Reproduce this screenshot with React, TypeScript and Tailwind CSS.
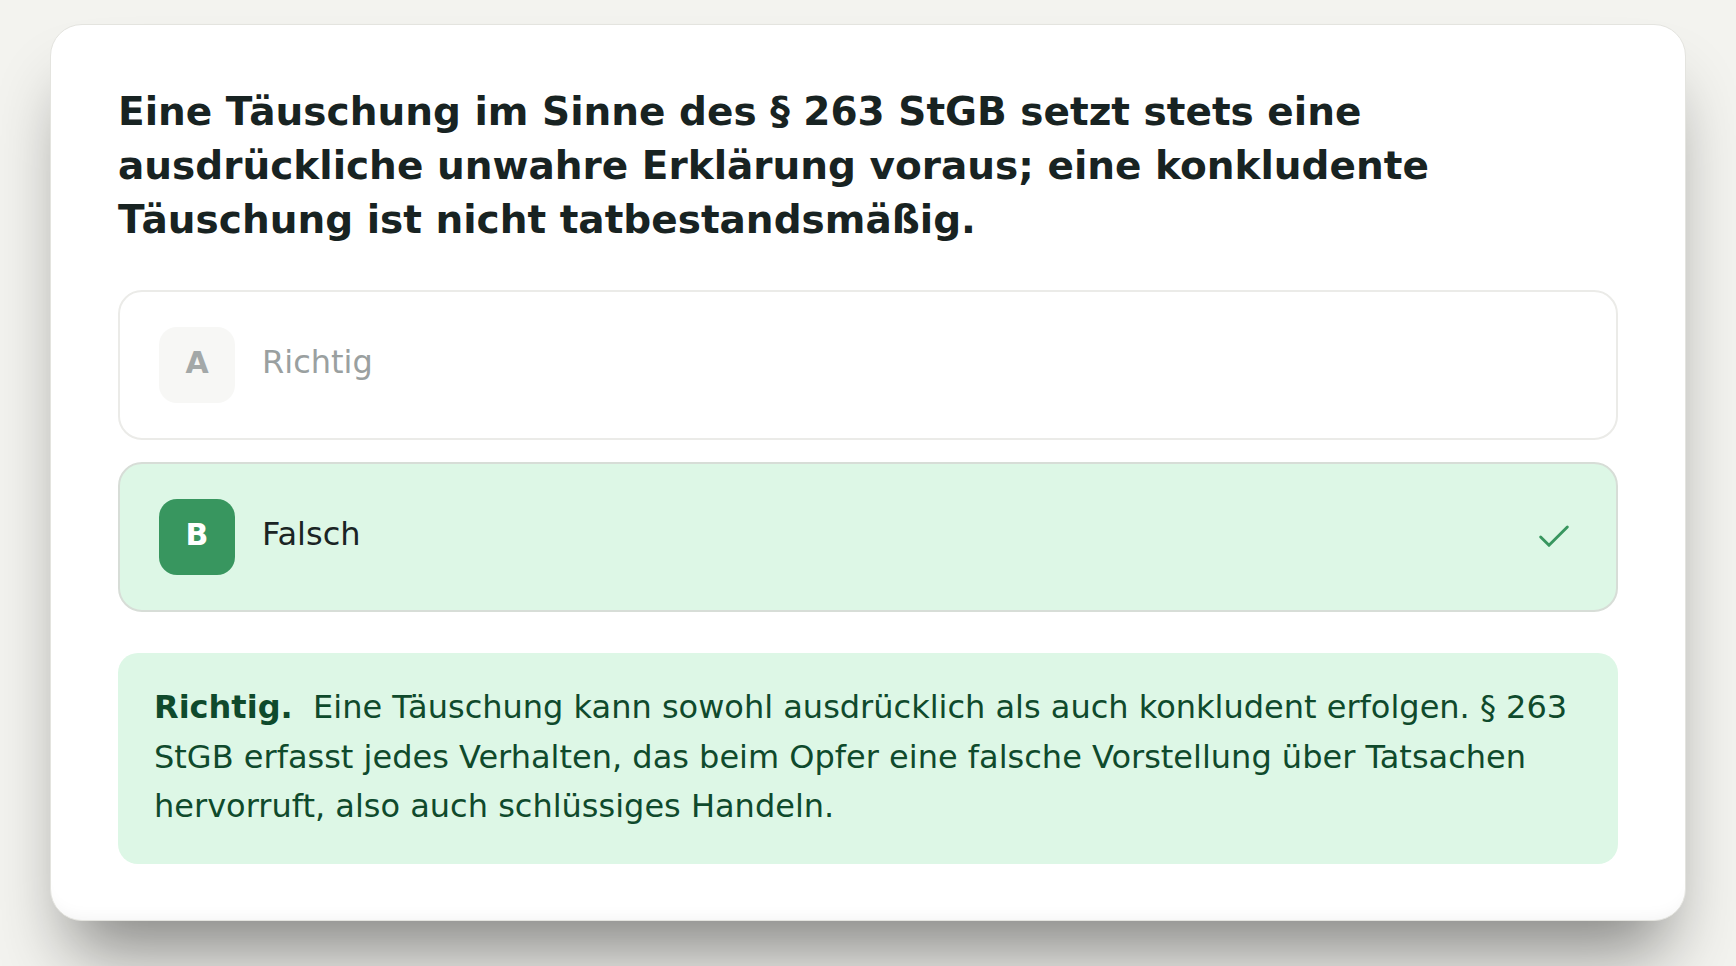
import React from 'react';
import { Check } from 'lucide-react';

interface OptionProps {
  letter: string;
  label: string;
  correct?: boolean;
}

function Option({ letter, label, correct }: OptionProps) {
  if (correct) {
    return (
      <div className="h-[150px] flex items-center justify-between pl-[39px] pr-[42px] rounded-[24px] border-2 border-[#d7ddd7] bg-[#ddf7e6]">
        <div className="flex items-center gap-[27px]">
          <div className="w-[76px] h-[76px] pb-[5px] rounded-[18px] bg-[#38965f] flex items-center justify-center text-[30px] font-bold text-white">
            {letter}
          </div>
          <span className="pb-[6px] text-[32px] text-[#1a2424]">{label}</span>
        </div>
        <Check className="w-[40px] h-[40px] text-[#38965f]" strokeWidth={1.75} />
      </div>
    );
  }

  return (
    <div className="h-[150px] flex items-center pl-[39px] pr-[42px] rounded-[24px] border-2 border-[#ebebe8] bg-white">
      <div className="flex items-center gap-[27px]">
        <div className="w-[76px] h-[76px] pb-[5px] rounded-[18px] bg-[#f7f7f5] flex items-center justify-center text-[30px] font-bold text-[#a3a8a8]">
          {letter}
        </div>
        <span className="pb-[6px] text-[32px] text-[#9aa0a0]">{label}</span>
      </div>
    </div>
  );
}

export default function App() {
  return (
    <div className="min-h-screen bg-[#f3f3ef] px-[50px] pt-[24px] pb-[46px] font-['DejaVu_Sans','Verdana',sans-serif]">
      <div className="bg-white rounded-[32px] border border-[#e4e4df] shadow-[0_50px_70px_-20px_rgba(0,0,0,0.45),inset_0_-14px_18px_-14px_rgba(0,0,0,0.06)] pt-[60px] px-[67px] pb-[56px]">
        <h2 className="text-[39px] leading-[54px] font-bold text-[#182322]">
          Eine Täuschung im Sinne des § 263 StGB setzt stets eine ausdrückliche unwahre Erklärung voraus; eine
          konkludente Täuschung ist nicht tatbestandsmäßig.
        </h2>

        <div className="mt-[43px] flex flex-col gap-[22px]">
          <Option letter="A" label="Richtig" />
          <Option letter="B" label="Falsch" correct />
        </div>

        <p className="mt-[41px] rounded-[20px] bg-[#ddf7e6] px-[36px] pt-[30px] pb-[32px] text-[32px] leading-[49.5px] text-[#0f4a2c]">
          <strong className="font-bold">Richtig.</strong>&nbsp; Eine Täuschung kann sowohl ausdrücklich als auch
          konkludent erfolgen. § 263 StGB erfasst jedes Verhalten, das beim Opfer eine falsche Vorstellung über
          Tatsachen hervorruft, also auch schlüssiges Handeln.
        </p>
      </div>
    </div>
  );
}
